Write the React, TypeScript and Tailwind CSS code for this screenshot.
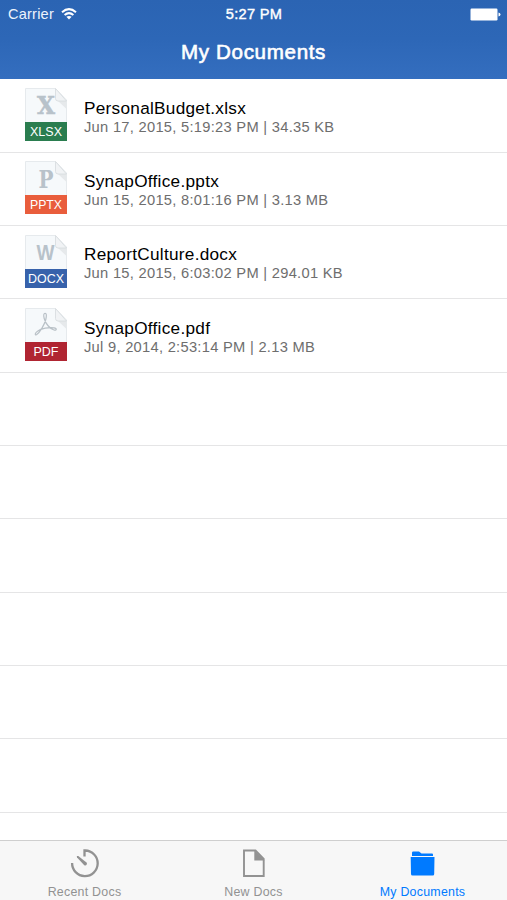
import React from "react";

type Doc = { name: string; meta: string; ext: string; color: string; labelWidth: number };

const docs: Doc[] = [
  { name: "PersonalBudget.xlsx", meta: "Jun 17, 2015, 5:19:23 PM | 34.35 KB", ext: "XLSX", color: "#2a7d4f", labelWidth: 32 },
  { name: "SynapOffice.pptx", meta: "Jun 15, 2015, 8:01:16 PM | 3.13 MB", ext: "PPTX", color: "#e95d3c", labelWidth: 32 },
  { name: "ReportCulture.docx", meta: "Jun 15, 2015, 6:03:02 PM | 294.01 KB", ext: "DOCX", color: "#3762ab", labelWidth: 36 },
  { name: "SynapOffice.pdf", meta: "Jul 9, 2014, 2:53:14 PM | 2.13 MB", ext: "PDF", color: "#b02532", labelWidth: 25 },
];

function FileIcon({ doc }: { doc: Doc }) {
  return (
    <svg width="42" height="53" viewBox="0 0 42 53" className="shrink-0">
      <path d="M.5 .5H30.5L41.5 12V52.5H.5Z" fill="#f6f9fb" stroke="#e6eaed" strokeWidth="1" />
      <path d="M33 13H41.500V21Z" fill="#e6e9eb" />
      <path d="M30.500 .5V10.500Q30.500 13 33 13H41.500Z" fill="#f1f3f5" stroke="#d5dadd" strokeWidth=".8" />
      {doc.ext === "XLSX" && (
        <text x="21" y="26" textAnchor="middle" fontFamily="'DejaVu Serif', serif" fontWeight="700" fontSize="23.500" textLength="18" lengthAdjust="spacingAndGlyphs" fill="#b8c2ca" stroke="#b8c2ca" strokeWidth=".5">X</text>
      )}
      {doc.ext === "PPTX" && (
        <text x="21" y="27" textAnchor="middle" fontFamily="'DejaVu Serif', serif" fontWeight="700" fontSize="24" textLength="15" lengthAdjust="spacingAndGlyphs" fill="#b8c2ca">P</text>
      )}
      {doc.ext === "DOCX" && (
        <text x="20.500" y="25" textAnchor="middle" fontFamily="'Liberation Sans', sans-serif" fontWeight="700" fontSize="21.500" textLength="18" lengthAdjust="spacingAndGlyphs" fill="#b8c2ca">W</text>
      )}
      {doc.ext === "PDF" && (
        <path d="M19.500 5.500C22 4.500 21.500 8.500 20.800 11.500C19.500 16.500 15 24.500 11.500 26.700C9.500 27.300 10 25 12.500 23.300C16 20.500 24 19 29 19.800C32.500 20.500 31.500 22.800 29 22C25 21 20.500 15.500 19.200 10.500C18.600 8 18.500 6 19.500 5.500Z" fill="none" stroke="#b9c1c7" strokeWidth="1.200" />
      )}
      <rect y="34" width="42" height="19" fill={doc.color} />
      <text x="21" y="47.700" textAnchor="middle" fontFamily="'Liberation Sans', sans-serif" fontSize="13" fill="#fff" textLength={doc.labelWidth} lengthAdjust="spacingAndGlyphs">{doc.ext}</text>
    </svg>
  );
}

function RecentIcon() {
  return (
    <svg width="30" height="30" viewBox="0 0 30 30" fill="none">
      <path d="M14.500 8.500V2.500H15.200A12.800 12.800 0 1 1 2.100 15" stroke="#929292" strokeWidth="2.300" />
      <path d="M6.800 8L8.300 8L16.800 14.800C17.500 16.500 16 18 14.300 17.200L7 9.500Z" fill="#929292" />
    </svg>
  );
}

function NewIcon() {
  return (
    <svg width="30" height="30" viewBox="0 0 30 30" fill="none">
      <path d="M5 2.500H16.500L24.700 11V28H5Z" stroke="#929292" strokeWidth="1.900" />
      <path d="M15.300 2V12.500H25.500Z" fill="#929292" />
    </svg>
  );
}

function FolderIcon() {
  return (
    <svg width="30" height="30" viewBox="0 0 30 30" fill="#007aff">
      <path d="M4 8V4.700Q4 3.500 5.200 3.500H11L13.500 5.500H24Q25 5.500 25 6.500V8Z" />
      <path d="M2.700 9H26.500L26.200 26Q26.200 27.500 24.700 27.500H4.500Q3 27.500 3 26Z" />
    </svg>
  );
}

export default function App() {
  return (
    <div className="flex h-[900px] w-[507px] flex-col overflow-hidden bg-white font-['Liberation_Sans',Arial,sans-serif]">
      <header className="h-[79px] shrink-0 bg-gradient-to-b from-[#2b64b3] via-[#2d67b7] to-[#346ebf] text-white">
        <div className="grid h-[28px] grid-cols-3 items-center pr-[6px] pl-2 text-[14.6px] leading-none">
          <div className="flex items-center gap-[7px] text-[#edf3fc]">
            <span className="tracking-[0.2px]">Carrier</span>
            <svg width="16" height="12" viewBox="0 0 16 12" fill="none" stroke="#fff" strokeWidth="2">
              <path d="M1 4.300Q8-2 15 4.300M3.600 7Q8 3.300 12.400 7" />
              <path d="M5.400 8.800Q8 7 10.600 8.800L8 11.500Z" fill="#fff" stroke="none" />
            </svg>
          </div>
          <span className="pr-[1px] text-center tracking-[0.3px] [-webkit-text-stroke:0.4px_white]">5:27 PM</span>
          <svg className="justify-self-end" width="31" height="13" viewBox="0 0 31 13" fill="#fff">
            <rect x=".5" y=".5" width="27" height="12" rx="1.200" />
            <path d="M28.500 4.500Q30.500 5 30.500 6.500T28.500 8.500Z" />
          </svg>
        </div>
        <h1 className="pt-[11px] text-center text-[20.6px] leading-[26px] tracking-[0.65px] [-webkit-text-stroke:0.6px_white]">My Documents</h1>
      </header>
      <main className="h-[761px] shrink-0 overflow-hidden pt-[0.5px]">
        {docs.map((d) => (
          <div key={d.name} className="flex h-[73.33px] items-center border-b border-[#e5e5e6] pb-[2px] pl-[25px]">
            <FileIcon doc={d} />
            <div className="ml-[17px] pt-[4px] whitespace-nowrap">
              <div className="text-[17.2px] leading-[20px] tracking-[0.28px] text-black">{d.name}</div>
              <div className="text-[14.7px] leading-[18px] tracking-[0.28px] text-[#6e6e6e]">{d.meta}</div>
            </div>
          </div>
        ))}
        {Array.from({ length: 6 }, (_, i) => (
          <div key={i} className="h-[73.33px] border-b border-[#e5e5e6]" />
        ))}
      </main>
      <nav className="grid h-[60px] shrink-0 grid-cols-3 border-t border-[#cfcfcf] bg-[#f7f7f7] text-[12.4px] leading-[14px] text-[#929292]">
        <div className="flex flex-col items-center pt-[7px]">
          <RecentIcon />
          <span className="mt-[7px] tracking-[0.25px]">Recent Docs</span>
        </div>
        <div className="flex flex-col items-center pt-[7px]">
          <NewIcon />
          <span className="mt-[7px] tracking-[0.25px]">New Docs</span>
        </div>
        <div className="flex flex-col items-center pt-[7px] text-[#007aff]">
          <FolderIcon />
          <span className="mt-[7px] tracking-[0.25px]">My Documents</span>
        </div>
      </nav>
    </div>
  );
}
